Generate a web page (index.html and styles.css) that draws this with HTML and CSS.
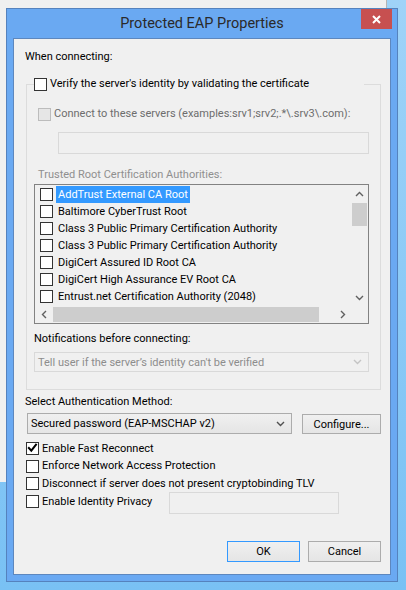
FILE: index.html
```
<!DOCTYPE html>
<html>
<head>
<meta charset="utf-8">
<link rel="stylesheet" href="styles.css">
</head>
<body>
<div class="bgwin"></div>
<div class="dialog">
  <div class="titlebar">
    <span class="title">Protected EAP Properties</span>
    <div class="close"><svg width="9" height="9" viewBox="0 0 9 9"><path d="M1 1 L8 8 M8 1 L1 8" stroke="#fff" stroke-width="2" fill="none"/></svg></div>
  </div>
  <div class="client">
    <div class="label when">When connecting:</div>
    <fieldset class="group">
      <legend class="legend"><span class="cb"></span><span class="cbtext">Verify the server's identity by validating the certificate</span></legend>
      <div class="cbrow connect dis"><span class="cb cb-dis"></span><span class="cbtext">Connect to these servers (examples:srv1;srv2;.*\.srv3\.com):</span></div>
      <div class="textbox dis servers"></div>
      <div class="label trusted">Trusted Root Certification Authorities:</div>
      <div class="listbox">
        <div class="items">
          <div class="item"><span class="cb"></span><span class="itext sel">AddTrust External CA Root</span></div>
          <div class="item"><span class="cb"></span><span class="itext">Baltimore CyberTrust Root</span></div>
          <div class="item"><span class="cb"></span><span class="itext">Class 3 Public Primary Certification Authority</span></div>
          <div class="item"><span class="cb"></span><span class="itext">Class 3 Public Primary Certification Authority</span></div>
          <div class="item"><span class="cb"></span><span class="itext">DigiCert Assured ID Root CA</span></div>
          <div class="item"><span class="cb"></span><span class="itext">DigiCert High Assurance EV Root CA</span></div>
          <div class="item"><span class="cb"></span><span class="itext">Entrust.net Certification Authority (2048)</span></div>
        </div>
        <div class="vscroll">
          <div class="arrow"><svg width="9" height="6" viewBox="0 0 9 6"><path d="M1 5 L4.5 1.5 L8 5" fill="none" stroke="#606060" stroke-width="1.4"/></svg></div>
          <div class="vtrack"><div class="vthumb"></div></div>
          <div class="arrow"><svg width="9" height="6" viewBox="0 0 9 6"><path d="M1 1 L4.5 4.5 L8 1" fill="none" stroke="#606060" stroke-width="1.4"/></svg></div>
        </div>
        <div class="hscroll">
          <div class="arrow"><svg width="6" height="9" viewBox="0 0 6 9"><path d="M5 1 L1.5 4.5 L5 8" fill="none" stroke="#606060" stroke-width="1.4"/></svg></div>
          <div class="htrack"><div class="hthumb"></div></div>
          <div class="arrow"><svg width="6" height="9" viewBox="0 0 6 9"><path d="M1 1 L4.5 4.5 L1 8" fill="none" stroke="#606060" stroke-width="1.4"/></svg></div>
        </div>
        <div class="corner"></div>
      </div>
      <div class="label notif">Notifications before connecting:</div>
      <div class="combo combo-dis"><span>Tell user if the server’s identity can't be verified</span><svg width="9" height="6" viewBox="0 0 9 6"><path d="M1 1 L4.5 4.5 L8 1" fill="none" stroke="#c4c4c4" stroke-width="1.4"/></svg></div>
    </fieldset>
    <div class="label select">Select Authentication Method:</div>
    <div class="authrow">
      <div class="combo method"><span>Secured password (EAP-MSCHAP v2)</span><svg width="9" height="6" viewBox="0 0 9 6"><path d="M1 1 L4.5 4.5 L8 1" fill="none" stroke="#505050" stroke-width="1.4"/></svg></div>
      <div class="btn configure">Configure...</div>
    </div>
    <div class="opts">
      <div class="cbrow opt"><span class="cb checked"><svg width="11" height="11" viewBox="0 0 11 11"><path d="M1.2 4.3 L4.3 7.6 L9.6 0.8" stroke="#000" stroke-width="2" fill="none"/></svg></span><span class="cbtext">Enable Fast Reconnect</span></div>
      <div class="cbrow opt"><span class="cb"></span><span class="cbtext">Enforce Network Access Protection</span></div>
      <div class="cbrow opt"><span class="cb"></span><span class="cbtext">Disconnect if server does not present cryptobinding TLV</span></div>
      <div class="lastrow">
        <div class="cbrow opt privacy"><span class="cb"></span><span class="cbtext">Enable Identity Privacy</span></div>
        <div class="textbox dis identity"></div>
      </div>
    </div>
    <div class="buttons">
      <div class="btn default">OK</div>
      <div class="btn">Cancel</div>
    </div>
  </div>
</div>
</body>
</html>
```
FILE: styles.css
```
* { box-sizing: border-box; }
html, body { margin: 0; padding: 0; }
body {
  width: 406px;
  height: 590px;
  overflow: hidden;
  position: relative;
  background: linear-gradient(180deg, #9fd3f8 0%, #79c1f4 100%);
  font-family: "Segoe UI", Roboto, sans-serif;
  font-size: 11px;
  color: #000;
}
.bgwin {
  position: absolute;
  left: 0;
  top: 0;
  width: 387px;
  height: 482px;
  background: #f0f0f0;
  border-right: 1px solid #b4b4b4;
}
.dialog {
  position: absolute;
  left: 6px;
  top: 8px;
  width: 392px;
  height: 574px;
  background: #6aa9f2;
  border: 1px solid #5582bd;
  display: flex;
  flex-direction: column;
}
.titlebar {
  height: 29px;
  position: relative;
  display: flex;
  align-items: center;
  justify-content: center;
  padding-bottom: 1px;
}
.title { font-size: 14.5px; color: #2a2a2a; }
.close {
  position: absolute;
  right: 5px;
  top: 0;
  width: 31px;
  height: 20px;
  background: #c75050;
  display: flex;
  align-items: center;
  justify-content: center;
}
.client {
  flex: 1;
  margin: 0 6px 6px;
  background: #f0f0f0;
  border: 1px solid #5d87be;
  display: flex;
  flex-direction: column;
  padding: 10px 9px 12px 11px;
}
.label { line-height: 16px; height: 16px; white-space: nowrap; }
.group {
  margin: 11px 0 0 1px;
  padding: 0 11px 17px 7px;
  border: 1px solid #dcdcdc;
  min-inline-size: 0;
}
.legend {
  padding: 0;
  width: 330px;
  height: 16px;
  display: flex;
  align-items: center;
  background: #f0f0f0;
}
.cb {
  width: 13px;
  height: 13px;
  border: 1px solid #333;
  background: #fff;
  flex: none;
  display: flex;
}
.cb-dis { border-color: #bcbcbc; background: #e6e6e6; }
.cbtext { margin-left: 3px; white-space: nowrap; line-height: 16px; }
.cbrow { display: flex; align-items: center; height: 16px; }
.connect { margin: 14px 0 0 4px; }
.dis .cbtext { color: #6d6d6d; }
.textbox { height: 22px; border: 1px solid #d9d9d9; background: #f0f0f0; }
.servers { margin: 10px 0 0 24px; }
.trusted { margin: 13px 0 0 4px; color: #8f8f8f; }
.listbox {
  margin-top: 1px;
  height: 140px;
  border: 1px solid #828282;
  display: grid;
  grid-template-columns: 1fr 17px;
  grid-template-rows: 1fr 17px;
  background: #f0f0f0;
}
.items { padding-top: 1px; overflow: hidden; }
.item { display: flex; align-items: center; height: 17px; padding-left: 5px; }
.itext { margin-left: 3px; padding: 0 2px; line-height: 17px; white-space: nowrap; }
.sel { background: #3399ff; color: #fff; }
.vscroll { display: flex; flex-direction: column; }
.arrow { width: 17px; height: 17px; display: flex; align-items: center; justify-content: center; flex: none; }
.vtrack { flex: 1; padding: 0 1px; }
.vthumb { height: 23px; background: #cdcdcd; margin-top: 1px; }
.hscroll { display: flex; }
.htrack { flex: 1; padding: 1px 0; }
.hthumb { width: 266px; height: 15px; background: #cdcdcd; margin-left: 1px; }
.corner { background: #f0f0f0; }
.notif { margin-top: 7px; }
.combo {
  height: 20px;
  display: flex;
  align-items: center;
  justify-content: space-between;
  padding: 0 6px 0 3px;
  white-space: nowrap;
}
.combo-dis { margin-top: 5px; border: 1px solid #d9d9d9; color: #8d8d8d; }
.select { margin-top: 4px; }
.authrow { display: flex; gap: 10px; margin: 3px 0 0 2px; align-items: flex-start; }
.method {
  width: 265px;
  height: 21px;
  border: 1px solid #acacac;
  background: linear-gradient(180deg, #f0f0f0, #e5e5e5);
}
.btn {
  height: 21px;
  width: 73px;
  border: 1px solid #acacac;
  background: linear-gradient(180deg, #f0f0f0, #e5e5e5);
  display: flex;
  align-items: center;
  justify-content: center;
  white-space: nowrap;
}
.configure { width: 79px; height: 20px; margin-top: 1px; }
.default { border-color: #3399ff; }
.opts { margin: 6px 0 0 1px; display: flex; flex-direction: column; }
.opt { height: 17.6px; }
.lastrow { display: flex; align-items: flex-start; }
.privacy { width: 143px; }
.identity { width: 170px; margin-top: -1px; }
.buttons { margin-top: auto; display: flex; justify-content: flex-end; gap: 8px; }
```
